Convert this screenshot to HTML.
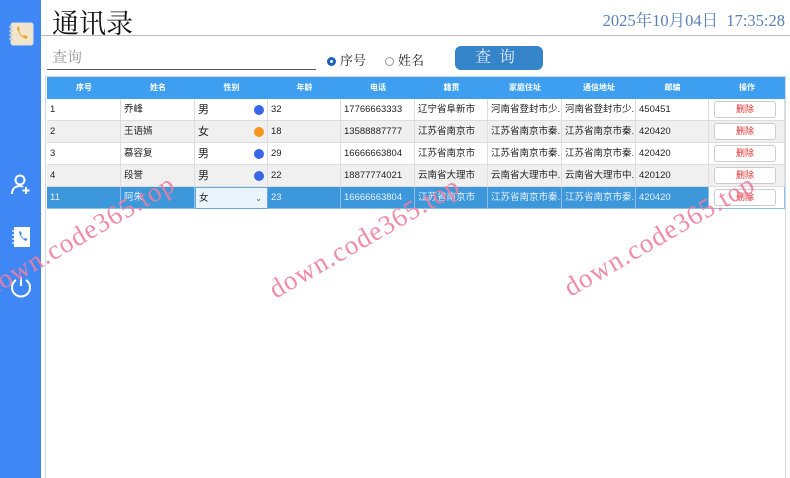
<!DOCTYPE html>
<html><head><meta charset="utf-8"><style>
*{margin:0;padding:0;box-sizing:border-box}
body{width:790px;height:478px;overflow:hidden;background:#fff;position:relative;font-family:"Liberation Sans","Noto Sans CJK SC",sans-serif}
.side{position:absolute;left:0;top:0;width:41px;height:478px;background:#3f87f5}
.title{position:absolute;left:52px;top:2px;font-size:27px;color:#111;font-family:"Liberation Serif","Noto Serif CJK SC",serif}
.date{position:absolute;right:5px;top:7px;font-size:16.5px;color:#5a7fb5;font-family:"Liberation Serif","Noto Serif CJK SC",serif}
.hr{position:absolute;left:41px;right:0;top:35px;height:1px;background:#bbb}
.search{position:absolute;left:47px;top:46px;width:269px;height:24px;border-bottom:1px solid #555;font-size:15px;color:#999;padding-left:5px;line-height:24px;font-family:"Liberation Serif","Noto Serif CJK SC",serif}
.radio{position:absolute;top:50px;font-size:13px;color:#222;font-family:"Liberation Serif","Noto Serif CJK SC",serif}
.rd{display:inline-block;width:9px;height:9px;border-radius:50%;border:1px solid #999;margin-right:4px;vertical-align:-1px}
.rd.on{border:3px solid #1a63b8}
.btn{position:absolute;left:455px;top:46px;width:88px;height:24px;background:#3584c9;border-radius:6px;color:#dfe9f5;font-size:16px;text-align:center;line-height:24px;letter-spacing:8px;font-family:"Liberation Serif","Noto Serif CJK SC",serif}
.tbl{position:absolute;left:45px;top:76px;width:741px;height:402px;border:1px solid #cfd8e3;border-bottom:none}
.row{position:absolute;left:1px;height:22px;width:738px;font-size:9.5px;color:#222}
.row div{position:absolute;top:0;height:22px;line-height:22px;padding-left:3px;border-right:1px solid #ddd;border-bottom:1px solid #ddd;white-space:nowrap;overflow:hidden}
.hd{background:#3e9ff1;top:0;height:22px}
.hd div{color:#fff;text-align:center;padding:0;border:none;font-size:8px;font-weight:bold}
.g{background:#f0f0f0}
.sel{background:#3c97db;color:#e8f1fb}
.sel div{border-color:#8cc0ea}
.dot{position:absolute;right:3px;top:6px;width:10px;height:10px;border-radius:50%;background:#3867e8}
.sx{font-size:11px}
.del{position:absolute;left:5px!important;top:2px!important;width:62px;height:17px!important;line-height:15px!important;border:1px solid #ccc!important;border-radius:3px;background:#fff;color:#e03030;text-align:center;padding:0!important;font-size:9px}
.wm{position:absolute;color:#f07f9e;font-size:27px;letter-spacing:1px;font-family:"Liberation Serif",serif;transform-origin:0 100%;transform:rotate(-30deg);white-space:nowrap;opacity:.9}
</style></head><body>
<div class="side">
<svg style="position:absolute;left:8px;top:22px" width="26" height="24" viewBox="0 0 26 24"><rect x="3" y="1" width="22" height="22" rx="2" fill="#f1e6cc" stroke="#ddd"/><path d="M1 5h4M1 9h4M1 13h4M1 17h4" stroke="#ccc" stroke-width="1.5"/><path d="M9 6c1 5 4 9 9 11l2-2-3-2-2 1c-2-1-3-3-4-5l1-2-2-3z" fill="#f0a030"/></svg>
<svg style="position:absolute;left:10px;top:174px" width="22" height="22" viewBox="0 0 22 22" fill="none" stroke="#fff" stroke-width="2"><circle cx="10" cy="6" r="4.5"/><path d="M2 20c0-5 3-8 8-8 1 0 2 0 3 1"/><path d="M16 13v7M12.5 16.5h7"/></svg>
<svg style="position:absolute;left:11px;top:226px" width="20" height="22" viewBox="0 0 20 22"><rect x="3" y="1" width="16" height="20" fill="#fff"/><path d="M1 5h3M1 9h3M1 13h3M1 17h3" stroke="#fff" stroke-width="1.2"/><path d="M8 6c1 4 3 7 7 9l1.5-1.5-2-1.6-1.5.8c-1.5-1-2.3-2.3-3-4l.8-1.3-1.5-2.4z" fill="#3f87f5"/></svg>
<svg style="position:absolute;left:9px;top:275px" width="24" height="24" viewBox="0 0 24 24" fill="none" stroke="#fff" stroke-width="2"><path d="M7 5a9 9 0 1 0 10 0"/><path d="M12 2v9"/></svg>
</div>
<div class="title">通讯录</div>
<div class="date">2025年10月04日&nbsp; 17:35:28</div>
<div class="hr"></div>
<div class="search">查询</div>
<div class="radio" style="left:327px"><span class="rd on"></span>序号</div>
<div class="radio" style="left:385px"><span class="rd"></span>姓名</div>
<div class="btn">查询</div>
<div class="tbl">
<div class="row hd"><div style="left:0;width:74px">序号</div><div style="left:74px;width:74px">姓名</div><div style="left:148px;width:73px">性别</div><div style="left:221px;width:73px">年龄</div><div style="left:294px;width:74px">电话</div><div style="left:368px;width:73px">籍贯</div><div style="left:441px;width:74px">家庭住址</div><div style="left:515px;width:74px">通信地址</div><div style="left:589px;width:73px">邮编</div><div style="left:662px;width:76px">操作</div></div>

<div class="row" style="top:22px"><div style="left:0;width:74px">1</div><div style="left:74px;width:74px">乔峰</div><div class="sx" style="left:148px;width:73px">男<span class="dot"></span></div><div style="left:221px;width:73px">32</div><div style="left:294px;width:74px">17766663333</div><div style="left:368px;width:73px">辽宁省阜新市</div><div style="left:441px;width:74px">河南省登封市少...</div><div style="left:515px;width:74px">河南省登封市少...</div><div style="left:589px;width:73px">450451</div><div style="left:662px;width:76px"><span class="del" style="position:absolute">删除</span></div></div>

<div class="row g" style="top:44px"><div style="left:0;width:74px">2</div><div style="left:74px;width:74px">王语嫣</div><div class="sx" style="left:148px;width:73px">女<span class="dot" style="background:#f7941d"></span></div><div style="left:221px;width:73px">18</div><div style="left:294px;width:74px">13588887777</div><div style="left:368px;width:73px">江苏省南京市</div><div style="left:441px;width:74px">江苏省南京市秦...</div><div style="left:515px;width:74px">江苏省南京市秦...</div><div style="left:589px;width:73px">420420</div><div style="left:662px;width:76px"><span class="del" style="position:absolute">删除</span></div></div>

<div class="row" style="top:66px"><div style="left:0;width:74px">3</div><div style="left:74px;width:74px">慕容复</div><div class="sx" style="left:148px;width:73px">男<span class="dot"></span></div><div style="left:221px;width:73px">29</div><div style="left:294px;width:74px">16666663804</div><div style="left:368px;width:73px">江苏省南京市</div><div style="left:441px;width:74px">江苏省南京市秦...</div><div style="left:515px;width:74px">江苏省南京市秦...</div><div style="left:589px;width:73px">420420</div><div style="left:662px;width:76px"><span class="del" style="position:absolute">删除</span></div></div>

<div class="row g" style="top:88px"><div style="left:0;width:74px">4</div><div style="left:74px;width:74px">段誉</div><div class="sx" style="left:148px;width:73px">男<span class="dot"></span></div><div style="left:221px;width:73px">22</div><div style="left:294px;width:74px">18877774021</div><div style="left:368px;width:73px">云南省大理市</div><div style="left:441px;width:74px">云南省大理市中...</div><div style="left:515px;width:74px">云南省大理市中...</div><div style="left:589px;width:73px">420120</div><div style="left:662px;width:76px"><span class="del" style="position:absolute">删除</span></div></div>

<div class="row sel" style="top:110px"><div style="left:0;width:74px">11</div><div style="left:74px;width:74px">阿朱</div><div style="left:148px;width:73px;background:#eaf4fc;color:#222;border:1px solid #6aa8dc">女<span style="position:absolute;right:5px;font-size:8px;color:#555">⌄</span></div><div style="left:221px;width:73px">23</div><div style="left:294px;width:74px">16666663804</div><div style="left:368px;width:73px">江苏省南京市</div><div style="left:441px;width:74px">江苏省南京市秦...</div><div style="left:515px;width:74px">江苏省南京市秦...</div><div style="left:589px;width:73px">420420</div><div style="left:662px;width:76px;background:#fff"><span class="del" style="position:absolute">删除</span></div></div>
</div>
<div class="wm" style="left:-6px;top:272px">down.code365.top</div>
<div class="wm" style="left:279px;top:274px">down.code365.top</div>
<div class="wm" style="left:574px;top:272px">down.code365.top</div>
</body></html>
